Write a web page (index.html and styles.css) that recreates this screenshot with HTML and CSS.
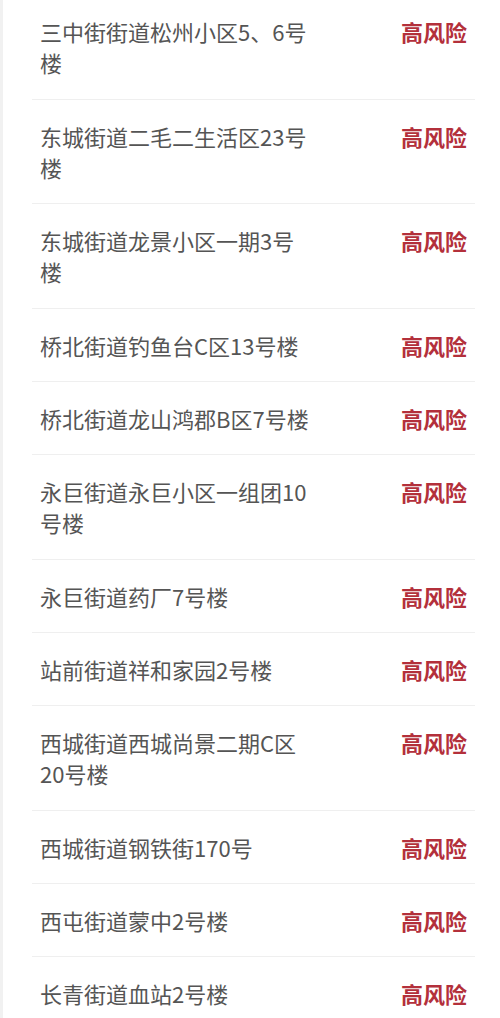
FILE: index.html
```html
<!DOCTYPE html>
<html lang="zh">
<head>
<meta charset="utf-8">
<link rel="stylesheet" href="styles.css">
</head>
<body>
<div class="page">
  <ul class="list">
    <li class="row"><span class="name">三中街街道松州小区5、6号<br>楼</span><span class="risk">高风险</span></li>
    <li class="row"><span class="name">东城街道二毛二生活区23号<br>楼</span><span class="risk">高风险</span></li>
    <li class="row"><span class="name">东城街道龙景小区一期3号<br>楼</span><span class="risk">高风险</span></li>
    <li class="row"><span class="name">桥北街道钓鱼台C区13号楼</span><span class="risk">高风险</span></li>
    <li class="row"><span class="name">桥北街道龙山鸿郡B区7号楼</span><span class="risk">高风险</span></li>
    <li class="row"><span class="name">永巨街道永巨小区一组团10<br>号楼</span><span class="risk">高风险</span></li>
    <li class="row"><span class="name">永巨街道药厂7号楼</span><span class="risk">高风险</span></li>
    <li class="row"><span class="name">站前街道祥和家园2号楼</span><span class="risk">高风险</span></li>
    <li class="row"><span class="name">西城街道西城尚景二期C区<br>20号楼</span><span class="risk">高风险</span></li>
    <li class="row"><span class="name">西城街道钢铁街170号</span><span class="risk">高风险</span></li>
    <li class="row"><span class="name">西屯街道蒙中2号楼</span><span class="risk">高风险</span></li>
    <li class="row"><span class="name">长青街道血站2号楼</span><span class="risk">高风险</span></li>
  </ul>
</div>
</body>
</html>
```

FILE: styles.css
```css
html, body {
  margin: 0;
  padding: 0;
  background: #ffffff;
  overflow: hidden;
}
body {
  font-family: "Noto Sans CJK SC", "Noto Sans", sans-serif;
}
.page {
  height: 1018px;
  border-left: 3px solid #f1f1f1;
  padding-left: 29px;
  padding-right: 25px;
  box-sizing: border-box;
  overflow: hidden;
}
.list {
  list-style: none;
  margin: -5px 0 0 0;
  padding: 0;
}
.row {
  display: flex;
  justify-content: space-between;
  align-items: flex-start;
  padding: 21px 8px 20px 8px;
  border-bottom: 1px solid #efefef;
  font-size: 22px;
  line-height: 31.25px;
}
.name {
  color: #555555;
}
.risk {
  color: #b3303b;
  font-weight: 700;
  flex-shrink: 0;
}
```
